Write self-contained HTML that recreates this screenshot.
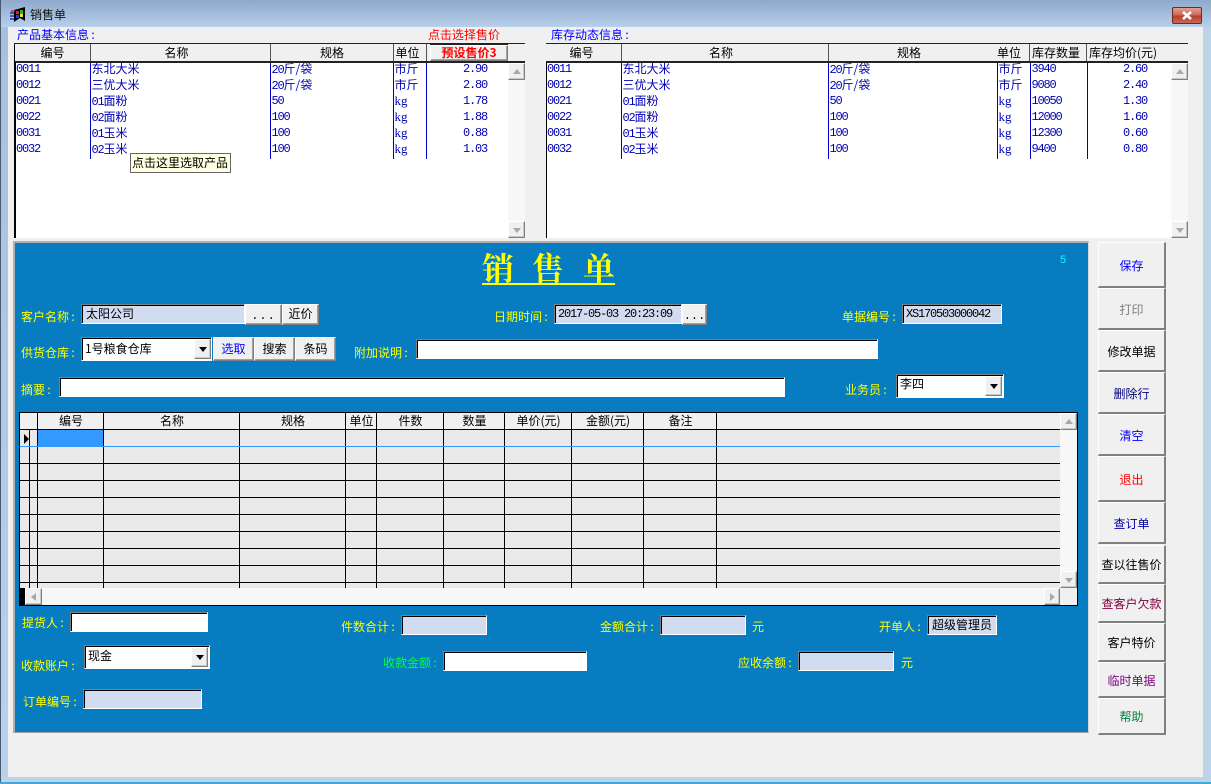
<!DOCTYPE html>
<html lang="zh-CN"><head><meta charset="utf-8"><title>销售单</title>
<style>
html,body{margin:0;padding:0;width:1211px;height:784px;overflow:hidden;background:#bcd3ea}
body{position:relative;font:12px/14px "WenQuanYi Zen Hei","Noto Sans CJK SC",sans-serif;color:#000}
div,span.a{position:absolute;box-sizing:border-box}
.l{font-family:"Liberation Mono",monospace;font-size:12px;letter-spacing:-1.2px}
.t{white-space:nowrap;height:14px;line-height:14px}
.y{color:#ff0}
.c{text-align:center}
.inp{background:#fff;border:1px solid;border-color:#808080 #fff #fff #808080;box-shadow:inset 1px 1px 0 #000;padding:2px 0 0 4px;white-space:nowrap;line-height:14px;overflow:hidden}
.f{background:#d2dcf0}
.btn{background:#f0f0f0;border:1px solid;border-color:#fff #808080 #808080 #fff;box-shadow:inset -1px -1px 0 #a0a0a0;text-align:center;white-space:nowrap}
.side{left:1098px;width:68px;background:#f0f0f0;border-top:1px solid #fff;border-left:1px solid #fff;border-right:2px solid #808080;border-bottom:2px solid #808080;text-align:center;display:flex;align-items:center;justify-content:center;padding-top:2px}
.sb{background:#f0f0f0;border:1px solid;border-color:#fff #808080 #808080 #fff;box-shadow:inset -1px -1px 0 #c8c8c8}
.sb::after{content:"";position:absolute;width:0;height:0;left:50%;top:50%;border-style:solid}
.u::after{margin:-3px 0 0 -4px;border-width:0 4px 5px;border-color:transparent transparent #a8a8a8}
.d::after{margin:-2px 0 0 -4px;border-width:5px 4px 0;border-color:#a8a8a8 transparent transparent}
.lf::after{margin:-4px 0 0 -3px;border-width:4px 5px 4px 0;border-color:transparent #a8a8a8 transparent transparent}
.rt::after{margin:-4px 0 0 -2px;border-width:4px 0 4px 5px;border-color:transparent transparent transparent #a8a8a8}
.ar::after{border-width:5px 4px 0;border-color:#000 transparent transparent;margin:-2px 0 0 -4px}
.hatch{background:#f7f7f7}
table{position:absolute;border-collapse:collapse;table-layout:fixed;color:#0000b4}
td{height:16px;padding:0 0 0 1px;border-right:1px solid #0000c0;vertical-align:top;line-height:12px;white-space:nowrap;overflow:hidden}
td:first-child{padding-left:2px}
td.k{font-family:"Liberation Serif",serif;font-size:13px}
.h{top:44px;height:17px;line-height:17px;background:#f0f0f0;text-align:center;border-right:1px solid #555;white-space:nowrap;overflow:hidden}
.gh{top:413px;height:16px;line-height:16px;text-align:center;white-space:nowrap}
.pr{color:#0000b4;width:30px;letter-spacing:-1.2px}
</style></head><body>

<!-- window frame -->
<div style="left:0;top:0;width:1211px;height:27px;background:linear-gradient(180deg,#8fa9cc 0%,#a8c0de 60%,#b9d0ea 100%)"></div>
<div style="left:0;top:0;width:1px;height:784px;background:#4a5a70"></div>
<div style="left:1px;top:27px;width:7px;height:750px;background:linear-gradient(180deg,#a8c0de,#b9d1ea)"></div>
<div style="left:0;top:782px;width:1211px;height:2px;background:#3fa9d9"></div>
<div style="left:8px;top:27px;width:1195px;height:750px;background:#f0f0f0"></div>

<svg style="position:absolute;left:10px;top:7px" width="16" height="16" viewBox="0 0 16 16">
<path d="M4 3L15 0V14L10 11L4 15Z" fill="#000"/>
<path d="M0 6H4M0 9H4M0 12H4" stroke="#2030d0" stroke-width="1.4"/><path d="M1 4H5" stroke="#d02020" stroke-width="1.4"/>
<rect x="6" y="4" width="3" height="3" fill="#e02020"/><rect x="10" y="3" width="3" height="4" fill="#30b030"/>
<rect x="6" y="8" width="3" height="3" fill="#2040e0"/><rect x="10" y="7" width="3" height="3" fill="#f0e020"/>
</svg>
<div class="t" style="left:30px;top:8px;color:#111">销售单</div>

<div style="left:1172px;top:7px;width:30px;height:17px;border:1px solid #6b2a24;border-radius:2px;background:linear-gradient(180deg,#e2a090 0%,#cf6a58 45%,#b8402e 55%,#c86a50 100%)"></div>
<svg style="position:absolute;left:1181px;top:11px" width="12" height="9" viewBox="0 0 12 9"><path d="M2 1L10 8M10 1L2 8" stroke="#fff" stroke-width="2.6"/></svg>

<!-- top labels -->
<div class="t" style="left:17px;top:28px;color:#0000ff">产品基本信息&#8201;:</div>
<div class="t" style="left:428px;top:28px;color:#ff0000">点击选择售价</div>
<div class="t" style="left:551px;top:28px;color:#0000ff">库存动态信息&#8201;:</div>

<!-- left list -->
<div style="left:14px;top:43px;width:511px;height:195px;background:#fff;border-left:2px solid #000"></div>
<table style="left:14px;top:63px;width:412px">
<colgroup><col style="width:76px"><col style="width:180px"><col style="width:123px"><col style="width:33px"></colgroup>
<tr><td class="l">0011</td><td>东北大米</td><td><span class="l">20</span>斤/袋</td><td>市斤</td></tr>
<tr><td class="l">0012</td><td>三优大米</td><td><span class="l">20</span>斤/袋</td><td>市斤</td></tr>
<tr><td class="l">0021</td><td><span class="l">01</span>面粉</td><td class="l">50</td><td class="k">kg</td></tr>
<tr><td class="l">0022</td><td><span class="l">02</span>面粉</td><td class="l">100</td><td class="k">kg</td></tr>
<tr><td class="l">0031</td><td><span class="l">01</span>玉米</td><td class="l">100</td><td class="k">kg</td></tr>
<tr><td class="l">0032</td><td><span class="l">02</span>玉米</td><td class="l">100</td><td class="k">kg</td></tr>
</table>
<div class="t l pr" style="left:463px;top:62px">2.90</div>
<div class="t l pr" style="left:463px;top:78px">2.80</div>
<div class="t l pr" style="left:463px;top:94px">1.78</div>
<div class="t l pr" style="left:463px;top:110px">1.88</div>
<div class="t l pr" style="left:463px;top:126px">0.88</div>
<div class="t l pr" style="left:463px;top:142px">1.03</div>

<div style="left:14px;top:43px;width:511px;height:2px;background:#222"></div>
<div style="left:15px;top:61px;width:510px;height:2px;background:#222"></div>
<div class="h" style="left:15px;width:76px">编号</div>
<div class="h" style="left:91px;width:180px;padding-right:8px">名称</div>
<div class="h" style="left:271px;width:123px">规格</div>
<div class="h" style="left:394px;width:33px;padding-right:5px">单位</div>
<div class="h" style="left:427px;width:3px;border:0"></div>
<div class="btn" style="left:430px;top:45px;width:78px;height:16px;line-height:14px;color:#ff0000;font-weight:bold">预设售价3</div>
<div class="h" style="left:508px;width:17px;border:0"></div>
<div class="hatch" style="left:508px;top:63px;width:17px;height:175px"></div>
<div class="sb u" style="left:508px;top:63px;width:17px;height:17px"></div>
<div class="sb d" style="left:508px;top:221px;width:17px;height:17px"></div>

<!-- tooltip -->
<div style="left:130px;top:153px;width:101px;height:20px;background:#ffffe1;border:1px solid #666;padding:2px 0 0 1px;white-space:nowrap;line-height:14px">点击这里选取产品</div>

<!-- right list -->
<div style="left:546px;top:43px;width:642px;height:195px;background:#fff;border-left:1px solid #000"></div>
<table style="left:545px;top:63px;width:542px">
<colgroup><col style="width:76px"><col style="width:207px"><col style="width:169px"><col style="width:33px"><col style="width:57px"></colgroup>
<tr><td class="l">0011</td><td>东北大米</td><td><span class="l">20</span>斤/袋</td><td>市斤</td><td class="l">3940</td></tr>
<tr><td class="l">0012</td><td>三优大米</td><td><span class="l">20</span>斤/袋</td><td>市斤</td><td class="l">9080</td></tr>
<tr><td class="l">0021</td><td><span class="l">01</span>面粉</td><td class="l">50</td><td class="k">kg</td><td class="l">10050</td></tr>
<tr><td class="l">0022</td><td><span class="l">02</span>面粉</td><td class="l">100</td><td class="k">kg</td><td class="l">12000</td></tr>
<tr><td class="l">0031</td><td><span class="l">01</span>玉米</td><td class="l">100</td><td class="k">kg</td><td class="l">12300</td></tr>
<tr><td class="l">0032</td><td><span class="l">02</span>玉米</td><td class="l">100</td><td class="k">kg</td><td class="l">9400</td></tr>
</table>
<div class="t l pr" style="left:1123px;top:62px">2.60</div>
<div class="t l pr" style="left:1123px;top:78px">2.40</div>
<div class="t l pr" style="left:1123px;top:94px">1.30</div>
<div class="t l pr" style="left:1123px;top:110px">1.60</div>
<div class="t l pr" style="left:1123px;top:126px">0.60</div>
<div class="t l pr" style="left:1123px;top:142px">0.80</div>

<div style="left:546px;top:43px;width:642px;height:2px;background:#222"></div>
<div style="left:546px;top:61px;width:642px;height:2px;background:#222"></div>
<div class="h" style="left:546px;width:76px;padding-right:4px">编号</div>
<div class="h" style="left:622px;width:207px;padding-right:8px">名称</div>
<div class="h" style="left:829px;width:169px;padding-right:8px">规格</div>
<div class="h" style="left:997px;width:33px;padding-right:8px">单位</div>
<div class="h" style="left:1030px;width:57px;padding-right:4px">库存数量</div>
<div class="h" style="left:1087px;width:101px;border:0;text-align:left;padding-left:2px">库存均价(元)</div>
<div class="hatch" style="left:1171px;top:63px;width:17px;height:175px"></div>
<div class="sb u" style="left:1171px;top:63px;width:17px;height:17px"></div>
<div class="sb d" style="left:1171px;top:221px;width:17px;height:17px"></div>

<!-- blue panel -->
<div style="left:13px;top:241px;width:1076px;height:492px;background:#077cc0;border-top:2px solid #b0b0b0;border-left:2px solid #b0b0b0;border-bottom:1px solid #a0a0a0;border-right:1px solid #d8d8d8"></div>

<div style="left:482px;top:249px;width:133px;height:36px;border-bottom:2px solid #ff0"></div>
<div class="y" style="left:482px;top:250px;font:32px/34px 'Noto Serif CJK SC',serif;font-weight:700;white-space:nowrap">销</div>
<div class="y" style="left:532px;top:250px;font:32px/34px 'Noto Serif CJK SC',serif;font-weight:700;white-space:nowrap">售</div>
<div class="y" style="left:583px;top:250px;font:32px/34px 'Noto Serif CJK SC',serif;font-weight:700;white-space:nowrap">单</div>
<div class="t" style="left:1060px;top:253px;color:#0ff;font-family:'Liberation Sans',sans-serif;font-size:11px">5</div>

<!-- row 1 -->
<div class="t y" style="left:21px;top:310px">客户名称&#8201;:</div>
<div class="inp f" style="left:81px;top:304px;width:164px;height:20px">太阳公司</div>
<div class="btn" style="left:245px;top:304px;width:37px;height:21px;line-height:22px;font-family:'Liberation Mono',monospace;letter-spacing:1px">...</div>
<div class="btn" style="left:282px;top:304px;width:37px;height:21px;line-height:18px">近价</div>
<div class="t y" style="left:494px;top:310px">日期时间&#8201;:</div>
<div class="inp f l" style="left:554px;top:304px;width:128px;height:20px;padding-left:3px">2017-05-03 20:23:09</div>
<div class="btn" style="left:682px;top:304px;width:25px;height:21px;line-height:22px;font-family:'Liberation Mono',monospace">...</div>
<div class="t y" style="left:842px;top:310px">单据编号&#8201;:</div>
<div class="inp f l" style="left:902px;top:304px;width:100px;height:20px;padding-left:3px">XS170503000042</div>

<!-- row 2 -->
<div class="t y" style="left:21px;top:346px">供货仓库&#8201;:</div>
<div class="inp" style="left:81px;top:337px;width:131px;height:24px;padding:4px 0 0 3px">1号粮食仓库</div>
<div class="sb ar" style="left:194px;top:339px;width:17px;height:20px"></div>
<div class="btn" style="left:213px;top:337px;width:41px;height:24px;line-height:21px;color:#0000ff">选取</div>
<div class="btn" style="left:254px;top:337px;width:41px;height:24px;line-height:21px">搜索</div>
<div class="btn" style="left:295px;top:337px;width:41px;height:24px;line-height:21px">条码</div>
<div class="t y" style="left:354px;top:346px">附加说明&#8201;:</div>
<div class="inp" style="left:416px;top:339px;width:462px;height:20px"></div>

<!-- row 3 -->
<div class="t y" style="left:21px;top:383px">摘要&#8201;:</div>
<div class="inp" style="left:59px;top:377px;width:726px;height:20px"></div>
<div class="t y" style="left:845px;top:383px">业务员&#8201;:</div>
<div class="inp" style="left:896px;top:374px;width:108px;height:24px;padding:2px 0 0 3px">李四</div>
<div class="sb ar" style="left:985px;top:376px;width:17px;height:20px"></div>

<!-- grid -->
<svg style="position:absolute;left:0;top:0" width="1211" height="784" shape-rendering="crispEdges">
<rect x="19" y="412" width="1059" height="194" fill="#000"/>
<rect x="20" y="413" width="1057" height="192" fill="#f7f7f7"/>
<rect x="20" y="413" width="1040" height="16" fill="#f0f0f0"/>
<rect x="20" y="430" width="1040" height="158" fill="#e9e9e9"/>
<rect x="38" y="430" width="65" height="16" fill="#3399ff"/>
<path d="M19.5 429.5H1060M19.5 463.5H1060M19.5 480.5H1060M19.5 497.5H1060M19.5 514.5H1060M19.5 531.5H1060M19.5 548.5H1060M19.5 565.5H1060M19.5 582.5H1060" stroke="#000" fill="none"/>
<path d="M29.5 430V588M37.5 413V588M103.5 413V588M239.5 413V588M345.5 413V588M376.5 413V588M443.5 413V588M504.5 413V588M571.5 413V588M643.5 413V588M716.5 413V588" stroke="#000" fill="none"/>
<path d="M19.5 446.5H1060" stroke="#3399ff" fill="none"/>
<path d="M24 434L24 444L29 439Z" fill="#000" shape-rendering="auto"/>
<rect x="19" y="588" width="6" height="17" fill="#000"/>
<rect x="1060" y="588" width="17" height="17" fill="#f0f0f0"/>
</svg>
<div class="gh" style="left:38px;width:66px">编号</div>
<div class="gh" style="left:104px;width:136px">名称</div>
<div class="gh" style="left:240px;width:106px">规格</div>
<div class="gh" style="left:346px;width:31px">单位</div>
<div class="gh" style="left:377px;width:67px">件数</div>
<div class="gh" style="left:444px;width:61px">数量</div>
<div class="gh" style="left:505px;width:67px">单价(元)</div>
<div class="gh" style="left:572px;width:72px">金额(元)</div>
<div class="gh" style="left:644px;width:73px">备注</div>
<div class="sb u" style="left:1060px;top:413px;width:17px;height:17px"></div>
<div class="sb d" style="left:1060px;top:571px;width:17px;height:17px"></div>
<div class="sb lf" style="left:25px;top:588px;width:17px;height:17px"></div>
<div class="sb rt" style="left:1044px;top:588px;width:16px;height:17px"></div>

<!-- bottom -->
<div class="t y" style="left:22px;top:616px">提货人&#8201;:</div>
<div class="inp" style="left:70px;top:612px;width:138px;height:20px"></div>
<div class="t y" style="left:341px;top:620px">件数合计&#8201;:</div>
<div class="inp f" style="left:401px;top:615px;width:86px;height:20px"></div>
<div class="t y" style="left:600px;top:620px">金额合计&#8201;:</div>
<div class="inp f" style="left:660px;top:615px;width:86px;height:20px"></div>
<div class="t y" style="left:752px;top:620px">元</div>
<div class="t y" style="left:879px;top:620px">开单人&#8201;:</div>
<div class="inp f" style="left:927px;top:615px;width:70px;height:20px;padding-left:4px">超级管理员</div>

<div class="t y" style="left:21px;top:659px">收款账户&#8201;:</div>
<div class="inp" style="left:84px;top:645px;width:126px;height:24px;padding:3px 0 0 3px">现金</div>
<div class="sb ar" style="left:191px;top:647px;width:17px;height:20px"></div>
<div class="t" style="left:383px;top:656px;color:#00ff40">收款金额&#8201;:</div>
<div class="inp" style="left:443px;top:651px;width:144px;height:20px"></div>
<div class="t y" style="left:738px;top:656px">应收余额&#8201;:</div>
<div class="inp f" style="left:798px;top:651px;width:96px;height:20px"></div>
<div class="t y" style="left:901px;top:656px">元</div>

<div class="t y" style="left:23px;top:695px">订单编号&#8201;:</div>
<div class="inp f" style="left:83px;top:689px;width:119px;height:20px"></div>

<!-- side buttons -->
<div class="side" style="top:242px;height:46px;color:#0000ff">保存</div>
<div class="side" style="top:288px;height:42px;color:#808080">打印</div>
<div class="side" style="top:330px;height:42px;color:#000">修改单据</div>
<div class="side" style="top:372px;height:42px;color:#000080">删除行</div>
<div class="side" style="top:414px;height:42px;color:#0000ff">清空</div>
<div class="side" style="top:456px;height:46px;color:#ff0000">退出</div>
<div class="side" style="top:502px;height:42px;color:#0000a0">查订单</div>
<div class="side" style="top:545px;height:39px;color:#000">查以往售价</div>
<div class="side" style="top:584px;height:39px;color:#800040">查客户欠款</div>
<div class="side" style="top:623px;height:39px;color:#000">客户特价</div>
<div class="side" style="top:662px;height:36px;color:#800080">临时单据</div>
<div class="side" style="top:698px;height:37px;color:#008040">帮助</div>

</body></html>
